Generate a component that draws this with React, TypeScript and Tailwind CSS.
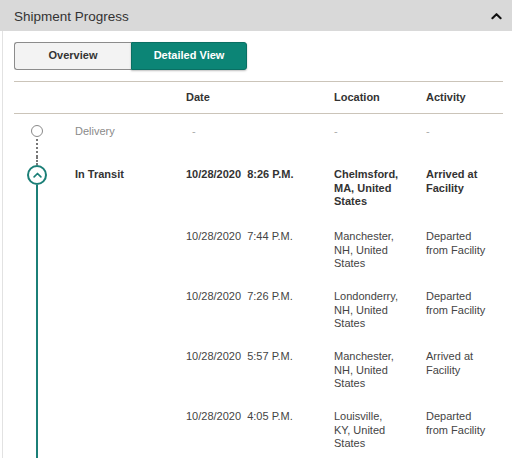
import React from "react";

type Row = {
  date: string;
  location: string;
  activity: string;
};

const rows: Row[] = [
  { date: "10/28/2020\u00a0\u00a07:44 P.M.", location: "Manchester, NH, United States", activity: "Departed from Facility" },
  { date: "10/28/2020\u00a0\u00a07:26 P.M.", location: "Londonderry, NH, United States", activity: "Departed from Facility" },
  { date: "10/28/2020\u00a0\u00a05:57 P.M.", location: "Manchester, NH, United States", activity: "Arrived at Facility" },
  { date: "10/28/2020\u00a0\u00a04:05 P.M.", location: "Louisville, KY, United States", activity: "Departed from Facility" },
];

const cols = "grid grid-cols-[61px_111px_148px_92px_1fr]";

function Chevron({ className, color }: { className?: string; color: string }) {
  return (
    <svg className={className} viewBox="0 0 12 8" fill="none">
      <polyline points="1.5,6.5 6,2 10.5,6.5" stroke={color} strokeWidth="2.2" strokeLinecap="round" strokeLinejoin="round" />
    </svg>
  );
}

export default function App() {
  return (
    <div className="w-[512px] h-[458px] overflow-hidden bg-white text-[11px] leading-[13.5px] text-[#333]" style={{ fontFamily: '"Liberation Sans", Arial, sans-serif' }}>
      <div className="h-[31px] bg-[#d9d9d9] flex items-center justify-between pl-[14px] pr-[10px]">
        <span className="text-[13.5px] text-[#333] pt-[2px]">Shipment Progress</span>
        <Chevron className="w-[11px] h-[8px]" color="#111" />
      </div>

      <div className="ml-[2px] border-l border-[#e2e2e2] pl-[11px] pr-[9px] h-[427px]">
        <div className="pt-[11px] flex">
          <button className="w-[117px] h-[28px] border border-[#8c8c8c] border-r-0 rounded-l-[3px] bg-[#f3f3f3] font-bold text-[#333]">
            Overview
          </button>
          <button className="w-[116px] h-[28px] rounded-r-[3px] bg-[#0c8576] border border-[#0a6f63] font-bold text-white shadow-[0_1px_2px_rgba(0,0,0,0.25)]">
            Detailed View
          </button>
        </div>

        <div className={`${cols} mt-[11px] h-[33px] items-center border-t border-b border-[#cbc4b9] font-bold`}>
          <div />
          <div />
          <div>Date</div>
          <div>Location</div>
          <div>Activity</div>
        </div>

        {/* Delivery row */}
        <div className={`${cols} h-[43px]`}>
          <div className="w-[46px] flex flex-col items-center pt-[11px]">
            <div className="w-[12px] h-[12px] rounded-full border-[1.5px] border-[#8a8a8a]" />
            <div className="flex-1 mt-[2px] border-l-2 border-dotted border-[#777]" />
          </div>
          <div className="pt-[11px] text-[#8a8a8a]">Delivery</div>
          <div className="pt-[11px] pl-[6px] text-[#aaa]">-</div>
          <div className="pt-[11px] text-[#aaa]">-</div>
          <div className="pt-[11px] text-[#aaa]">-</div>
        </div>

        {/* In Transit row */}
        <div className={`${cols} h-[62px] font-bold`}>
          <div className="w-[46px] flex flex-col items-center">
            <div className="h-[8px] border-l-2 border-dotted border-[#777]" />
            <div className="w-[20px] h-[20px] rounded-full border-2 border-[#1b7f77] flex items-center justify-center">
              <Chevron className="w-[9px] h-[6px]" color="#1b7f77" />
            </div>
            <div className="flex-1 w-[2px] bg-[#1b7f77]" />
          </div>
          <div className="pt-[11px]">In Transit</div>
          <div className="pt-[11px]">10/28/2020{"\u00a0\u00a0"}8:26 P.M.</div>
          <div className="pt-[11px] w-[67px]">Chelmsford, MA, United States</div>
          <div className="pt-[11px] w-[66px]">Arrived at Facility</div>
        </div>

        {rows.map((r, i) => (
          <div key={i} className={`${cols} h-[60px] text-[#444]`}>
            <div className="w-[46px] flex flex-col items-center">
              <div className="flex-1 w-[2px] bg-[#1b7f77]" />
            </div>
            <div />
            <div className="pt-[11px]">{r.date}</div>
            <div className="pt-[11px] w-[67px]">{r.location}</div>
            <div className="pt-[11px] w-[66px]">{r.activity}</div>
          </div>
        ))}
      </div>
    </div>
  );
}
